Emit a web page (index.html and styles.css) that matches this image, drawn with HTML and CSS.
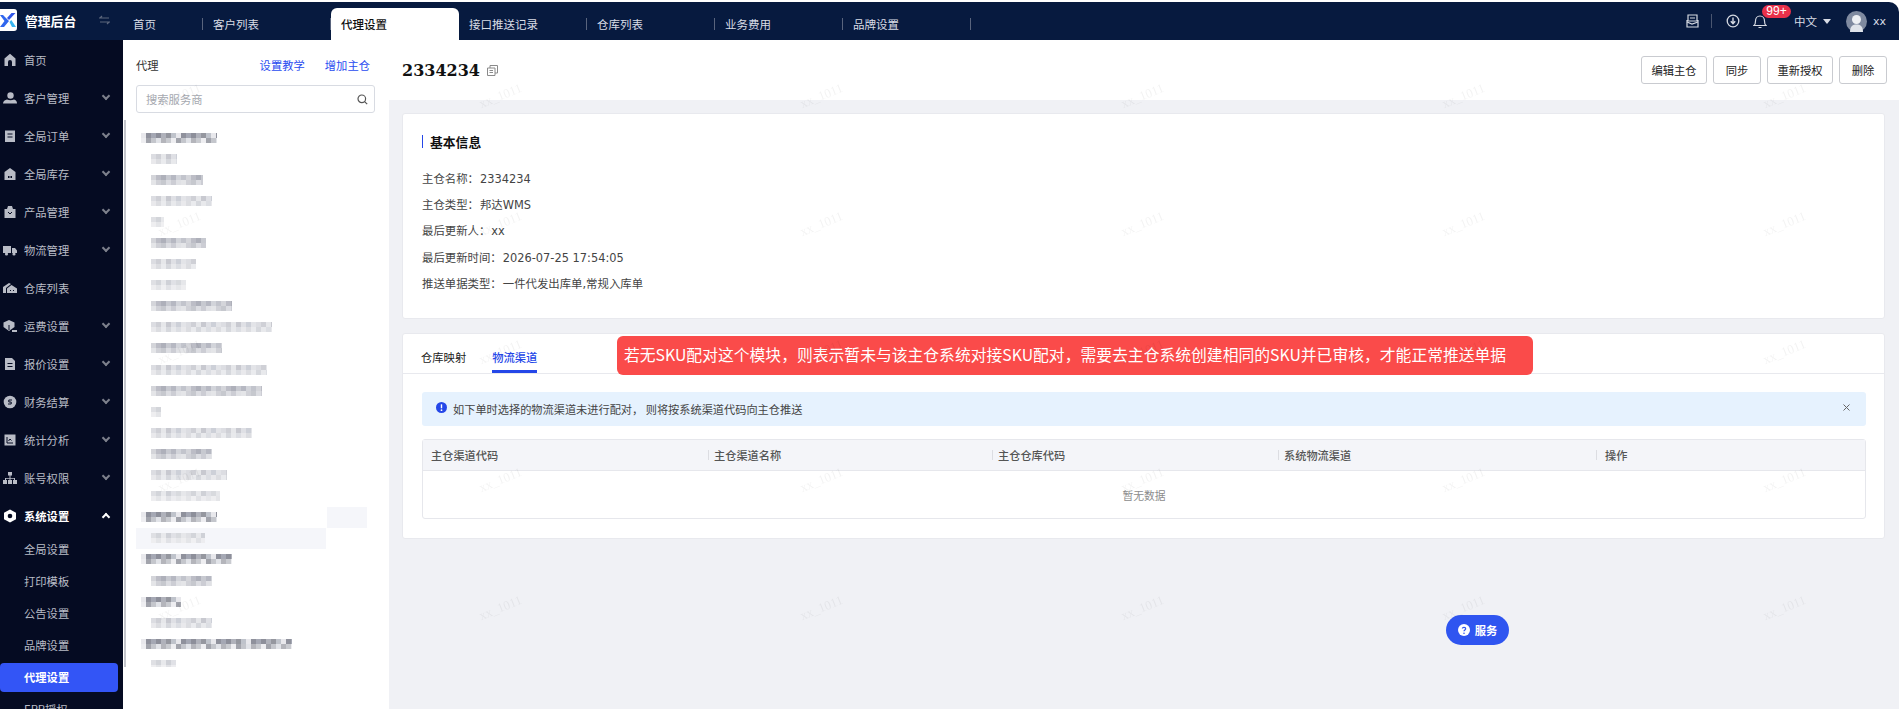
FILE: index.html
```html
<!DOCTYPE html>
<html lang="zh-CN">
<head>
    <meta charset="UTF-8">
    <title>代理设置</title>
    <link rel="stylesheet" href="styles.css">
</head>
<body>
    <!-- 顶部导航 -->
    <header class="topbar">
        <div class="brand">
            <span class="logo"><svg width="17" height="22" viewBox="0 0 17 22"><path d="M0 6h3l6 6-5 6H0l4.500-6z" fill="#2f66ee"/><path d="M15.500 4h-4L7 9l2 2z" fill="#2f55e8"/><path d="M9.500 13l1.800-2 4.700 7h-4z" fill="#38b6f2"/></svg></span>
            <span class="brand-name">管理后台</span>
            <svg class="swap" width="11" height="10" viewBox="0 0 11 10"><path d="M0 3h10M3 1L1 3M1 7h10M8 9l2-2" stroke="#5d677d" stroke-width="1.200" fill="none"/></svg>
        </div>
        <nav class="tabs">
            <a class="tab tab-first"><span>首页</span><i class="tab-sep"></i></a>
            <a class="tab"><span>客户列表</span><i class="tab-sep"></i></a>
            <a class="tab active"><span>代理设置</span></a>
            <a class="tab"><span>接口推送记录</span><i class="tab-sep"></i></a>
            <a class="tab"><span>仓库列表</span><i class="tab-sep"></i></a>
            <a class="tab"><span>业务费用</span><i class="tab-sep"></i></a>
            <a class="tab"><span>品牌设置</span><i class="tab-sep"></i></a>
        </nav>
        <div class="tools">
            <svg class="tool-inbox" width="13" height="14" viewBox="0 0 13 14" fill="none" stroke="#d5d9e2" stroke-width="1.200"><path d="M2 1h9v6H2zM1 6v7h11V6"/><path d="M4 4h5M1 8l5 2 6-2"/></svg>
            <i class="tool-sep"></i>
            <svg class="tool-down" width="14" height="14" viewBox="0 0 14 14" fill="none" stroke="#d5d9e2"><circle cx="7" cy="7" r="5.800" stroke-width="1.300"/><path d="M7 3.500v6M4.800 7.300L7 9.800l2.200-2.500" stroke-width="1.400"/></svg>
            <div class="bell">
                <svg width="14" height="16" viewBox="0 0 14 16" fill="none" stroke="#d5d9e2" stroke-width="1.200"><path d="M1 12.500c1.300-1 1.500-2 1.500-4.500S4 3 7 3s4.500 2.500 4.500 5 .2 3.500 1.500 4.500zM5.500 14.500h3"/></svg>
                <span class="badge">99+</span>
            </div>
            <span class="lang">中文</span>
            <i class="caret"></i>
            <span class="avatar"><svg width="21" height="21" viewBox="0 0 21 21"><circle cx="10.500" cy="10.500" r="10.500" fill="#7f8aa0"/><circle cx="10.500" cy="8.500" r="4.500" fill="#eef0f4"/><path d="M4 21c0-6 3-7.500 6.500-7.500S17 15 17 21z" fill="#dfe3ea"/></svg></span>
            <span class="username">xx</span>
        </div>
    </header>

    <div class="layout">
        <!-- 左侧菜单 -->
        <aside class="sidebar">
            <a class="menu-item"><svg class="mi" viewBox="0 0 14 14"><path d="M7 .8L1.500 5.500V13H5V9a2 2 0 014 0v4h3.500V5.500z"/></svg><span>首页</span></a>
            <a class="menu-item"><svg class="mi" viewBox="0 0 14 14"><circle cx="7.500" cy="4.500" r="3.200"/><path d="M0 12.500c0-2.500 2-3.500 4-4 2 1 5 1 7 0 2 .5 3 2 3 4z"/></svg><span>客户管理</span><i class="chev"></i></a>
            <a class="menu-item"><svg class="mi" viewBox="0 0 14 14"><path d="M2 1.500h10V13H2z"/><path d="M4.500 5h5M4.500 8h5" stroke="#050b22" stroke-width="1"/></svg><span>全局订单</span><i class="chev"></i></a>
            <a class="menu-item"><svg class="mi" viewBox="0 0 14 14"><path d="M7 1l5.500 4v8h-11V5z"/><path d="M5 9h1.500v2H5zM7.500 9H9v2H7.500z" fill="#050b22"/></svg><span>全局库存</span><i class="chev"></i></a>
            <a class="menu-item"><svg class="mi" viewBox="0 0 14 14"><path d="M4 4l1-3h4l1 3h2.500v9h-11V4z"/><path d="M5 7l2 2 2-2" stroke="#050b22" fill="none"/></svg><span>产品管理</span><i class="chev"></i></a>
            <a class="menu-item"><svg class="mi" viewBox="0 0 14 14"><path d="M0 3h8v7H0zM9 5h3l2 2.500V10H9z"/><circle cx="3.500" cy="11" r="1.600"/><circle cx="11" cy="11" r="1.600"/></svg><span>物流管理</span><i class="chev"></i></a>
            <a class="menu-item"><svg class="mi" viewBox="0 0 14 14"><path d="M0 6l6-4 2 1-5 4v5H0z"/><path d="M8.500 4L14 7.500V12H4V7.500z"/><path d="M7 9.500h1M10 9.500h1" stroke="#050b22"/></svg><span>仓库列表</span></a>
            <a class="menu-item"><svg class="mi" viewBox="0 0 14 14"><path d="M6 1l5.500 2.500V8L6 12 .500 8V3.500z"/><path d="M6 6v5" stroke="#050b22"/><path d="M9 11h5v2H9z"/></svg><span>运费设置</span><i class="chev"></i></a>
            <a class="menu-item"><svg class="mi" viewBox="0 0 14 14"><path d="M2 1h7l3 3v9H2z"/><path d="M4.500 6.500h5M4.500 9.500h5" stroke="#050b22"/></svg><span>报价设置</span><i class="chev"></i></a>
            <a class="menu-item"><svg class="mi" viewBox="0 0 14 14"><circle cx="7" cy="7" r="6.300"/><path d="M9 5H5.800v2h2.400v2H5" stroke="#050b22" fill="none"/></svg><span>财务结算</span><i class="chev"></i></a>
            <a class="menu-item"><svg class="mi" viewBox="0 0 14 14"><path d="M1.500 1.500h11v11h-11z"/><path d="M4 4v6h6M5.500 8l1.500-2 1.500 1.500" stroke="#050b22" fill="none"/></svg><span>统计分析</span><i class="chev"></i></a>
            <a class="menu-item"><svg class="mi" viewBox="0 0 14 14"><path d="M5 1h4v3.500H5zM6.500 4.500h1V7H12v2h-1V7.800H7.500V9h-1V7.800H3V9H2V7h4.500z"/><path d="M0 9h4v4H0zM5 9h4v4H5zM10 9h4v4h-4z"/></svg><span>账号权限</span><i class="chev"></i></a>
            <a class="menu-item open"><svg class="mi" viewBox="0 0 14 14"><path d="M7 .5l6 3.300v6.400l-6 3.300-6-3.300V3.800z" fill="#fff"/><circle cx="7" cy="7" r="2.300" fill="#050b22"/></svg><span>系统设置</span><i class="chev up"></i></a>
            <div class="submenu">
                <a class="sub-item">全局设置</a>
                <a class="sub-item">打印模板</a>
                <a class="sub-item">公告设置</a>
                <a class="sub-item">品牌设置</a>
                <a class="sub-item current">代理设置</a>
                <a class="sub-item">ERP授权</a>
            </div>
        </aside>

        <!-- 代理列表 -->
        <section class="agents">
            <div class="agents-head">
                <span>代理</span>
                <a class="link link-first">设置教学</a>
                <a class="link">增加主仓</a>
            </div>
            <div class="search">
                <span>搜索服务商</span>
                <svg width="11" height="11" viewBox="0 0 11 11" fill="none" stroke="#555" stroke-width="1.200"><circle cx="4.800" cy="4.800" r="3.800"/><path d="M7.600 7.600l2.600 2.600"/></svg>
            </div>
            <div class="agent-list">
                <div class="agent-row top"><i class="blur m1" style="width:76px"></i></div>
                <div class="agent-row"><i class="blur m2" style="width:26px"></i></div>
                <div class="agent-row"><i class="blur m3" style="width:52px"></i></div>
                <div class="agent-row"><i class="blur m2" style="width:61px"></i></div>
                <div class="agent-row"><i class="blur m4" style="width:13px"></i></div>
                <div class="agent-row"><i class="blur m3" style="width:55px"></i></div>
                <div class="agent-row"><i class="blur m2" style="width:45px"></i></div>
                <div class="agent-row"><i class="blur m4" style="width:35px"></i></div>
                <div class="agent-row"><i class="blur m3" style="width:81px"></i></div>
                <div class="agent-row"><i class="blur m2" style="width:121px"></i></div>
                <div class="agent-row"><i class="blur m3" style="width:71px"></i></div>
                <div class="agent-row"><i class="blur m2" style="width:116px"></i></div>
                <div class="agent-row"><i class="blur m3" style="width:111px"></i></div>
                <div class="agent-row"><i class="blur m4" style="width:10px"></i></div>
                <div class="agent-row"><i class="blur m2" style="width:101px"></i></div>
                <div class="agent-row"><i class="blur m3" style="width:61px"></i></div>
                <div class="agent-row"><i class="blur m2" style="width:76px"></i></div>
                <div class="agent-row"><i class="blur m4" style="width:69px"></i></div>
                <div class="agent-row top tail"><i class="blur m1" style="width:76px"></i></div>
                <div class="agent-row hover"><i class="blur m4" style="width:54px"></i></div>
                <div class="agent-row top"><i class="blur m1" style="width:91px"></i></div>
                <div class="agent-row"><i class="blur m3" style="width:61px"></i></div>
                <div class="agent-row top"><i class="blur m1" style="width:40px"></i></div>
                <div class="agent-row"><i class="blur m2" style="width:61px"></i></div>
                <div class="agent-row top"><i class="blur m1" style="width:151px"></i></div>
                <div class="agent-row"><i class="blur m4" style="width:25px"></i></div>
            </div>
        </section>

        <!-- 主仓详情 -->
        <main class="content">
            <div class="page-head">
                <div class="page-title">
                    <h1>2334234</h1>
                    <svg width="11" height="11" viewBox="0 0 11 11" fill="none" stroke="#8a8a8a"><path d="M3 3V.5h7.500V8H8"/><path d="M.5 3H8v7.500H.5z"/><path d="M2.500 5.500h3.500M2.500 7.500h3.500"/></svg>
                </div>
                <div class="page-actions">
                    <button class="btn btn-wide">编辑主仓</button>
                    <button class="btn btn-small">同步</button>
                    <button class="btn btn-wide">重新授权</button>
                    <button class="btn btn-small">删除</button>
                </div>
            </div>

            <div class="body">
                <div class="card info-card">
                    <h2 class="card-title">基本信息</h2>
                    <p class="info-row">主仓名称：<span>2334234</span></p>
                    <p class="info-row">主仓类型：<span>邦达WMS</span></p>
                    <p class="info-row">最后更新人：<span>xx</span></p>
                    <p class="info-row">最后更新时间：<span>2026-07-25 17:54:05</span></p>
                    <p class="info-row">推送单据类型：<span>一件代发出库单,常规入库单</span></p>
                </div>

                <div class="card channel-card">
                    <div class="card-tabs">
                        <a class="card-tab">仓库映射</a>
                        <a class="card-tab on">物流渠道</a>
                    </div>
                    <div class="notice">若无SKU配对这个模块，则表示暂未与该主仓系统对接SKU配对，需要去主仓系统创建相同的SKU并已审核，才能正常推送单据</div>
                    <div class="alert">
                        <svg width="11" height="11" viewBox="0 0 11 11"><circle cx="5.500" cy="5.500" r="5.500" fill="#2547e8"/><path d="M5.500 2.300v4" stroke="#fff" stroke-width="1.400"/><circle cx="5.500" cy="8.200" r=".9" fill="#fff"/></svg>
                        <span>如下单时选择的物流渠道未进行配对， 则将按系统渠道代码向主仓推送</span>
                        <svg class="alert-close" width="7" height="7" viewBox="0 0 7 7" stroke="#666" stroke-width="1"><path d="M.5.500l6 6M6.500.500l-6 6"/></svg>
                    </div>
                    <div class="table">
                        <div class="thead">
                            <div class="th th-first">主仓渠道代码</div>
                            <div class="th"><i></i>主仓渠道名称</div>
                            <div class="th"><i></i>主仓仓库代码</div>
                            <div class="th"><i></i>系统物流渠道</div>
                            <div class="th th-last"><i></i>操作</div>
                        </div>
                        <div class="empty">暂无数据</div>
                    </div>
                </div>
            </div>
        </main>
    </div>

    <a class="service"><svg width="12" height="12" viewBox="0 0 12 12"><circle cx="6" cy="6" r="6" fill="#fff"/><path d="M4.300 4.500C4.500 3 7.700 3 7.700 4.800c0 1.200-1.700 1.200-1.700 2.500" stroke="#2f55f0" stroke-width="1.200" fill="none"/><circle cx="6" cy="9.200" r=".8" fill="#2f55f0"/></svg><span>服务</span></a>

    <!-- 水印 -->
    <div class="watermark">
        <span>xx_1011</span><span>xx_1011</span><span>xx_1011</span><span>xx_1011</span><span>xx_1011</span><span>xx_1011</span>
        <span>xx_1011</span><span>xx_1011</span><span>xx_1011</span><span>xx_1011</span><span>xx_1011</span><span>xx_1011</span>
        <span>xx_1011</span><span>xx_1011</span><span>xx_1011</span><span>xx_1011</span><span>xx_1011</span><span>xx_1011</span>
        <span>xx_1011</span><span>xx_1011</span><span>xx_1011</span><span>xx_1011</span><span>xx_1011</span><span>xx_1011</span>
        <span>xx_1011</span><span>xx_1011</span><span>xx_1011</span><span>xx_1011</span><span>xx_1011</span><span>xx_1011</span>
    </div>
</body>
</html>
```

FILE: styles.css
```css
*{
    margin: 0;
    padding: 0;
    box-sizing: border-box;
}
html,body{
    height: 709px;
    overflow: hidden;
}
body{
    background: #fff;
    font-family: "DejaVu Sans", "Noto Sans CJK SC", sans-serif;
    font-size: 11px;
    color: #333;
    padding: 2px 4px 0 0;
}
a{
    text-decoration: none;
}

/* 顶部导航 */
.topbar{
    height: 38px;
    background: #071a3f;
    border-top-right-radius: 10px;
    display: flex;
    font-family: "Noto Sans CJK SC", sans-serif;
}
.brand{
    width: 123px;
    display: flex;
    align-items: center;
    height: 36px;
}
.logo{
    width: 17px;
    height: 22px;
    background: #fff;
    border-radius: 0 3px 3px 0;
    display: flex;
    margin-right: 8px;
}
.brand-name{
    color: #fff;
    font-size: 12.800px;
    font-weight: 700;
    width: 51px;
    white-space: nowrap;
}
.swap{
    margin-left: 23px;
}
.tabs{
    display: flex;
}
.tab{
    width: 128px;
    height: 32px;
    margin-top: 6px;
    padding: 0 0 1px 10px;
    display: flex;
    align-items: center;
    justify-content: space-between;
    color: #d9dde6;
    font-size: 11.500px;
}
.tab-first{
    width: 80px;
}
.tab-sep{
    width: 1px;
    height: 12px;
    background: #59647d;
}
.tab.active{
    background: #fff;
    color: #111;
    font-weight: 500;
    border-radius: 6px 6px 0 0;
}
.tools{
    margin-left: auto;
    display: flex;
    align-items: center;
    height: 38px;
    padding-right: 13px;
    color: #d9dde6;
}
.tool-sep{
    width: 1px;
    height: 14px;
    background: #4a5670;
    margin: 0 14px 0 12px;
}
.bell{
    position: relative;
    display: flex;
    margin-left: 13px;
}
.badge{
    position: absolute;
    left: 9px;
    top: -8px;
    width: 29px;
    height: 13px;
    border-radius: 7px;
    background: #e8304a;
    color: #fff;
    font: 12px/13px "Liberation Sans", sans-serif;
    text-align: center;
}
.lang{
    font-size: 11.500px;
    margin-left: 27px;
}
.caret{
    width: 0;
    height: 0;
    border: 4px solid transparent;
    border-top: 5px solid #d9dde6;
    border-bottom: 0;
    margin-left: 6px;
}
.avatar{
    display: flex;
    margin-left: 15px;
}
.username{
    font-family: "DejaVu Sans", sans-serif;
    font-size: 11px;
    margin-left: 6px;
}

.layout{
    display: flex;
    height: 669px;
}

/* 左侧菜单 */
.sidebar{
    width: 123px;
    flex: none;
    background: #050b22;
    padding-top: 1px;
    font-family: "Noto Sans CJK SC", sans-serif;
    overflow: hidden;
}
.menu-item{
    height: 38px;
    display: flex;
    align-items: center;
    padding: 0 14px 0 3px;
    color: #b9bcc6;
    font-size: 11.300px;
    white-space: nowrap;
}
.mi{
    width: 14px;
    height: 14px;
    margin-right: 7px;
    fill: #b9bcc6;
    flex: none;
}
.chev{
    margin-left: auto;
    width: 6px;
    height: 6px;
    border: solid #7d808c;
    border-width: 0 2px 2px 0;
    transform: rotate(45deg);
    margin-top: -5px;
}
.chev.up{
    transform: rotate(225deg);
    margin-top: 2px;
    border-color: #fff;
}
.open{
    color: #fff;
    font-weight: 700;
}
.submenu{
    margin-top: -2px;
}
.sub-item{
    display: block;
    height: 32px;
    line-height: 32px;
    padding-left: 24px;
    color: #b9bcc6;
    font-size: 11.300px;
}
.sub-item.current{
    height: 29px;
    line-height: 29px;
    margin: 2px 5px 1px 0;
    background: #3355f6;
    border-radius: 4px;
    color: #fff;
    font-weight: 700;
}

/* 代理列表 */
.agents{
    width: 266px;
    flex: none;
    font-family: "Noto Sans CJK SC", sans-serif;
    font-size: 11.300px;
}
.agents-head{
    height: 45px;
    padding: 4px 19px 0 13px;
    display: flex;
    align-items: center;
    color: #333;
}
.link{
    color: #2a4cf0;
}
.link-first{
    margin-left: auto;
    margin-right: 20px;
}
.search{
    height: 28px;
    margin: 0 14px 0 13px;
    border: 1px solid #d8dbe2;
    border-radius: 3px;
    display: flex;
    align-items: center;
    justify-content: space-between;
    padding: 0 6px 0 9px;
    color: #a6a9b0;
}
.agent-list{
    height: 547px;
    margin: 7px 0 0 1px;
    border-left: 2px solid #c4c6cc;
    padding-top: 7px;
    overflow: hidden;
    position: relative;
}
.agent-row{
    height: 21.100px;
    display: flex;
    align-items: center;
    padding-left: 25px;
}
.agent-row.top{
    padding-left: 15px;
}
.agent-row.hover{
    margin-left: 10px;
    padding-left: 15px;
    width: 190px;
    background: #f5f6fa;
}
.agent-row.tail::after{
    content: "";
    position: absolute;
    left: 201px;
    width: 40px;
    height: 21px;
    background: #f5f6fa;
}
/* 打码的行：两排 5px 色块 */
.blur{
    display: block;
    height: 10px;
    filter: blur(.7px);
    background-repeat: repeat-x;
    background-position: 0 0, 0 5px;
    background-size: 35px 5px, 30px 5px;
}
.m1{
    background-image:
        linear-gradient(90deg, #e8e8ec 0 5px, #8f919c 5px 10px, #a5a8b4 10px 15px, #8d8f9a 15px 20px, #b0b2bb 20px 25px, #95979f 25px 30px, #bfc3cb 30px 35px),
        linear-gradient(90deg, #eeeef1 0 5px, #a2a4ac 5px 10px, #c4c6cc 10px 15px, #e1e3e8 15px 20px, #b4b5bb 20px 25px, #c9cbd0 25px 30px);
}
.m2{
    background-image:
        linear-gradient(90deg, #dcdde2 0 5px, #cfd0d6 5px 10px, #e6e7ea 10px 15px, #c8c9d0 15px 20px, #dfe0e5 20px 25px, #cdd0d8 25px 30px, #e3e4e8 30px 35px),
        linear-gradient(90deg, #e9e9ec 0 5px, #dcdde1 5px 10px, #eaebee 10px 15px, #d6d8dd 15px 20px, #e8e9ec 20px 25px, #dcdee3 25px 30px);
}
.m3{
    background-image:
        linear-gradient(90deg, #d4d5da 0 5px, #bcbdc6 5px 10px, #aeb0ba 10px 15px, #c7c9d0 15px 20px, #b6b8c2 20px 25px, #d2d4da 25px 30px, #c2c4cc 30px 35px),
        linear-gradient(90deg, #e4e5e8 0 5px, #d0d1d7 5px 10px, #c6c8ce 10px 15px, #dcdde2 15px 20px, #cccdd4 20px 25px, #e0e1e5 25px 30px);
}
.m4{
    background-image:
        linear-gradient(90deg, #dfe0e4 0 5px, #d3d5da 5px 10px, #e8e9ec 10px 15px, #cfd1d7 15px 20px, #e0e1e6 20px 25px, #d8dade 25px 30px, #e6e7ea 30px 35px),
        linear-gradient(90deg, #eeeef0 0 5px, #e4e5e8 5px 10px, #f0f0f2 10px 15px, #e1e2e6 15px 20px, #ededf0 20px 25px, #e6e7ea 25px 30px);
}

/* 主仓详情 */
.content{
    flex: 1;
    background: #f0f1f5;
    min-width: 0;
}
.page-head{
    height: 60px;
    background: #fff;
    display: flex;
    align-items: center;
    justify-content: space-between;
    padding: 0 12px 0 13px;
}
.page-title{
    display: flex;
    align-items: center;
    gap: 7px;
}
.page-title h1{
    font: 700 16px "DejaVu Serif", serif;
    color: #111;
}
.page-actions{
    display: flex;
    gap: 6px;
}
.btn{
    height: 28px;
    background: #fff;
    border: 1px solid #c9cbd0;
    border-radius: 3px;
    font: 11.300px "Noto Sans CJK SC", sans-serif;
    color: #222;
}
.btn-wide{
    width: 66px;
}
.btn-small{
    width: 48px;
}
.body{
    padding: 13px 14px 0 13px;
}
.card{
    background: #fff;
    border: 1px solid #e8e9ee;
    border-radius: 3px;
}
.info-card{
    height: 206px;
    padding: 21px 19px 0;
}
.card-title{
    font-size: 12.800px;
    line-height: 13px;
    font-weight: 700;
    color: #111;
    border-left: 1.500px solid #2547e8;
    padding-left: 7px;
    margin-bottom: 17px;
    font-family: "Noto Sans CJK SC", sans-serif;
}
.info-row{
    height: 26.200px;
    line-height: 26.200px;
    color: #444;
    font-size: 11.400px;
    font-family: "Noto Sans CJK SC", sans-serif;
}
.info-row span{
    font-family: "DejaVu Sans", "Noto Sans CJK SC", sans-serif;
    font-size: 11.400px;
    margin-left: 1px;
}
.channel-card{
    height: 206px;
    margin-top: 14px;
    position: relative;
}
.card-tabs{
    height: 40px;
    border-bottom: 1px solid #e8e9ee;
    display: flex;
    gap: 26px;
    padding-left: 18px;
    font-family: "Noto Sans CJK SC", sans-serif;
    font-size: 11.300px;
}
.card-tab{
    height: 39px;
    padding-top: 15px;
    color: #222;
    line-height: 16px;
}
.card-tab.on{
    color: #2547e8;
    font-weight: 500;
    border-bottom: 3px solid #2547e8;
}
.notice{
    position: absolute;
    left: 214px;
    top: 2px;
    width: 916px;
    height: 39px;
    background: #fa4b4a;
    color: #fff;
    border-radius: 6px;
    padding-left: 7px;
    font: 15.800px/38px "Noto Sans CJK SC", sans-serif;
    white-space: nowrap;
}
.alert{
    height: 34px;
    margin: 18px 18px 0 19px;
    background: #e6f2fe;
    border-radius: 3px;
    display: flex;
    align-items: center;
    padding: 0 16px 0 14px;
    color: #444;
    font-family: "Noto Sans CJK SC", sans-serif;
    font-size: 11.200px;
}
.alert svg{
    margin-top: -3px;
}
.alert span{
    margin-left: 6px;
}
.alert-close{
    margin-left: auto;
}
.table{
    height: 80px;
    margin: 13px 18px 0 19px;
    border: 1px solid #e6e7ec;
    border-radius: 3px;
    font-family: "Noto Sans CJK SC", sans-serif;
    font-size: 11.200px;
}
.thead{
    height: 31px;
    background: #f4f5f9;
    border-bottom: 1px solid #e6e7ec;
    display: grid;
    grid-template-columns: 285px 284px 286px 318px 1fr;
    color: #555;
    font-weight: 500;
}
.th{
    display: flex;
    align-items: center;
}
.th i{
    width: 1px;
    height: 10px;
    background: #dcdde2;
    margin-right: 5px;
}
.th-first{
    padding-left: 8px;
}
.th-last i{
    margin-right: 8px;
}
.empty{
    height: 47px;
    line-height: 48px;
    text-align: center;
    color: #8c8c8c;
    font-size: 10.800px;
}

/* 服务按钮 */
.service{
    position: fixed;
    right: 394px;
    bottom: 64px;
    width: 63px;
    height: 30px;
    border-radius: 15px;
    background: #2f55f0;
    color: #fff;
    display: flex;
    align-items: center;
    justify-content: center;
    gap: 5px;
    font: 700 11.300px "Noto Sans CJK SC", sans-serif;
}

/* 水印 */
.watermark{
    position: fixed;
    left: 0;
    top: 0;
    width: 1903px;
    height: 709px;
    overflow: hidden;
    padding: 32px 0 0 19px;
    display: grid;
    grid-template-columns: repeat(6, 321px);
    grid-auto-rows: 128px;
    pointer-events: none;
}
.watermark span{
    align-self: center;
    justify-self: center;
    transform: rotate(-22deg);
    font: 13px "Liberation Serif", serif;
    color: rgba(0, 0, 0, .05);
}
```
